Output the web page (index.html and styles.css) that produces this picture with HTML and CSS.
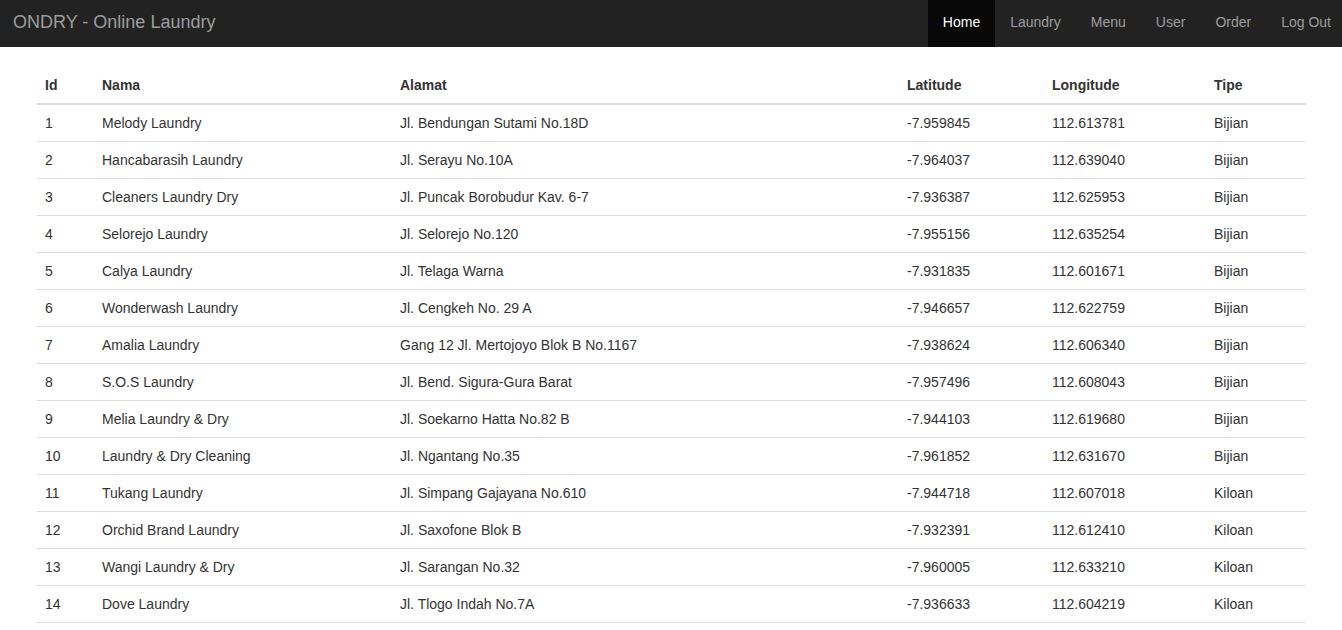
FILE: index.html
```html
<!DOCTYPE html>
<html lang="id">
<head>
<meta charset="utf-8">
<title>ONDRY - Online Laundry</title>
<link rel="stylesheet" href="styles.css">
</head>
<body>
<nav class="navbar">
  <a class="brand" href="#">ONDRY - Online Laundry</a>
  <ul class="nav">
    <li><a class="active" href="#">Home</a></li>
    <li><a href="#">Laundry</a></li>
    <li><a href="#">Menu</a></li>
    <li><a href="#">User</a></li>
    <li><a href="#">Order</a></li>
    <li><a href="#">Log Out</a></li>
  </ul>
</nav>
<main class="content">
  <table class="table">
    <colgroup>
      <col class="c-id"><col class="c-nama"><col class="c-alamat"><col class="c-lat"><col class="c-lng"><col class="c-tipe">
    </colgroup>
    <thead>
      <tr><th>Id</th><th>Nama</th><th>Alamat</th><th>Latitude</th><th>Longitude</th><th>Tipe</th></tr>
    </thead>
    <tbody>
      <tr><td>1</td><td>Melody Laundry</td><td>Jl. Bendungan Sutami No.18D</td><td>-7.959845</td><td>112.613781</td><td>Bijian</td></tr>
      <tr><td>2</td><td>Hancabarasih Laundry</td><td>Jl. Serayu No.10A</td><td>-7.964037</td><td>112.639040</td><td>Bijian</td></tr>
      <tr><td>3</td><td>Cleaners Laundry Dry</td><td>Jl. Puncak Borobudur Kav. 6-7</td><td>-7.936387</td><td>112.625953</td><td>Bijian</td></tr>
      <tr><td>4</td><td>Selorejo Laundry</td><td>Jl. Selorejo No.120</td><td>-7.955156</td><td>112.635254</td><td>Bijian</td></tr>
      <tr><td>5</td><td>Calya Laundry</td><td>Jl. Telaga Warna</td><td>-7.931835</td><td>112.601671</td><td>Bijian</td></tr>
      <tr><td>6</td><td>Wonderwash Laundry</td><td>Jl. Cengkeh No. 29 A</td><td>-7.946657</td><td>112.622759</td><td>Bijian</td></tr>
      <tr><td>7</td><td>Amalia Laundry</td><td>Gang 12 Jl. Mertojoyo Blok B No.1167</td><td>-7.938624</td><td>112.606340</td><td>Bijian</td></tr>
      <tr><td>8</td><td>S.O.S Laundry</td><td>Jl. Bend. Sigura-Gura Barat</td><td>-7.957496</td><td>112.608043</td><td>Bijian</td></tr>
      <tr><td>9</td><td>Melia Laundry &amp; Dry</td><td>Jl. Soekarno Hatta No.82 B</td><td>-7.944103</td><td>112.619680</td><td>Bijian</td></tr>
      <tr><td>10</td><td>Laundry &amp; Dry Cleaning</td><td>Jl. Ngantang No.35</td><td>-7.961852</td><td>112.631670</td><td>Bijian</td></tr>
      <tr><td>11</td><td>Tukang Laundry</td><td>Jl. Simpang Gajayana No.610</td><td>-7.944718</td><td>112.607018</td><td>Kiloan</td></tr>
      <tr><td>12</td><td>Orchid Brand Laundry</td><td>Jl. Saxofone Blok B</td><td>-7.932391</td><td>112.612410</td><td>Kiloan</td></tr>
      <tr><td>13</td><td>Wangi Laundry &amp; Dry</td><td>Jl. Sarangan No.32</td><td>-7.960005</td><td>112.633210</td><td>Kiloan</td></tr>
      <tr><td>14</td><td>Dove Laundry</td><td>Jl. Tlogo Indah No.7A</td><td>-7.936633</td><td>112.604219</td><td>Kiloan</td></tr>
    </tbody>
  </table>
</main>
</body>
</html>
```

FILE: styles.css
```css
* { box-sizing: border-box; }
html, body { margin: 0; padding: 0; }
body {
  font-family: "Liberation Sans", Arial, Helvetica, sans-serif;
  font-size: 14px;
  line-height: 20px;
  color: #333;
  background: #fff;
}
.navbar {
  display: flex;
  align-items: stretch;
  justify-content: space-between;
  height: 47px;
  background: #222;
  margin-bottom: 20px;
}
.brand {
  display: flex;
  align-items: center;
  padding: 0 13px 3px;
  font-size: 18px;
  color: #9d9d9d;
  text-decoration: none;
}
.nav {
  display: flex;
  list-style: none;
  margin: 0;
  padding: 0;
  margin-right: -4px;
}
.nav li { display: flex; }
.nav a {
  display: flex;
  align-items: center;
  padding: 0 15px 3px;
  color: #9d9d9d;
  text-decoration: none;
}
.nav a.active {
  color: #fff;
  background: #080808;
}
.content {
  padding: 0 36px 0 37px;
}
.table {
  width: 100%;
  border-collapse: collapse;
  border-spacing: 0;
  table-layout: fixed;
}
.c-id { width: 57px; }
.c-nama { width: 298px; }
.c-alamat { width: 507px; }
.c-lat { width: 145px; }
.c-lng { width: 162px; }
.c-tipe { width: auto; }
.table th, .table td {
  padding: 8px;
  text-align: left;
  vertical-align: top;
  line-height: 20px;
  white-space: nowrap;
}
.table th {
  font-weight: bold;
  border-bottom: 2px solid #ddd;
}
.table td {
  border-bottom: 1px solid #ddd;
}
```
